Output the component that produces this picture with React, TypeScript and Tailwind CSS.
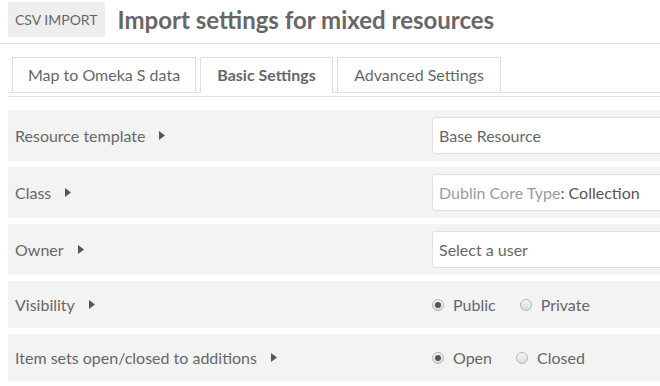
const Caret = () => (
  <svg width="6" height="9" viewBox="0 0 6 9" className="ml-[14px] shrink-0">
    <path d="M0 0 L6 4.5 L0 9 Z" fill="#555555" />
  </svg>
);

const Radio = ({ checked, label }: { checked?: boolean; label: string }) => (
  <label className="flex items-center">
    <span className="relative w-[12px] h-[12px] rounded-full border border-[#b5b5b5] bg-gradient-to-b from-[#f5f5f5] to-[#dcdcdc] flex items-center justify-center">
      {checked && <span className="w-[6px] h-[6px] rounded-full bg-[#555]" />}
    </span>
    <span className="ml-[9px]">{label}</span>
  </label>
);

const Row = ({ label, tall = true, children }: { label: string; tall?: boolean; children: React.ReactNode }) => (
  <div className={`flex items-center bg-[#f3f3f3] ml-[8px] w-[760px] shrink-0 ${tall ? 'h-[51px]' : 'h-[47px]'}`}>
    <div className="w-[424px] shrink-0 pl-[7px] flex items-center">
      {label}
      <Caret />
    </div>
    <div className="flex-1 flex items-center">{children}</div>
  </div>
);

const Input = ({ children }: { children: React.ReactNode }) => (
  <div className="h-[37px] w-[300px] shrink-0 bg-white border border-[#dfdfdf] rounded-[3px] flex items-center pl-[6px]">
    {children}
  </div>
);

export default function App() {
  return (
    <div
      className="w-[660px] h-[386px] overflow-hidden bg-white text-[16px] text-[#676767]"
      style={{ fontFamily: 'Lato, "Open Sans", sans-serif' }}
    >
      <header className="h-[44px] border-b border-[#dedede] pt-[2px] flex items-start">
        <div className="ml-[8px] h-[35px] px-[7px] bg-[#eeeeee] flex items-center text-[14px]">CSV IMPORT</div>
        <h1 className="ml-[13px] h-[35px] flex items-center text-[24px] font-bold">Import settings for mixed resources</h1>
      </header>

      <nav className="mt-[13px] ml-[8px] flex items-end border-b border-[#dedede] h-[36px]">
        <div className="ml-[4px] h-[35px] w-[184px] border-t border-x border-[#dedede] flex items-center justify-center">
          Map to Omeka S data
        </div>
        <div className="ml-[4px] h-[36px] -mb-px w-[133px] border-t border-x border-[#dedede] bg-white flex items-center justify-center font-bold pb-px">
          Basic Settings
        </div>
        <div className="ml-[4px] h-[35px] w-[164px] border-t border-x border-[#dedede] flex items-center justify-center">
          Advanced Settings
        </div>
      </nav>
      <div className="mt-[3px] ml-[8px] border-t border-[#dedede]" />

      <div className="mt-[13px] flex flex-col gap-[6px]">
        <Row label="Resource template">
          <Input>Base Resource</Input>
        </Row>
        <Row label="Class">
          <Input>
            <span className="text-[#9a9a9a]">Dublin Core Type</span>
            <span className="text-[#555]">: Collection</span>
          </Input>
        </Row>
        <Row label="Owner">
          <Input>Select a user</Input>
        </Row>
        <Row label="Visibility" tall={false}>
          <div className="flex items-center gap-[24px]">
            <Radio checked label="Public" />
            <Radio label="Private" />
          </div>
        </Row>
        <Row label="Item sets open/closed to additions" tall={false}>
          <div className="flex items-center gap-[24px]">
            <Radio checked label="Open" />
            <Radio label="Closed" />
          </div>
        </Row>
      </div>
    </div>
  );
}
